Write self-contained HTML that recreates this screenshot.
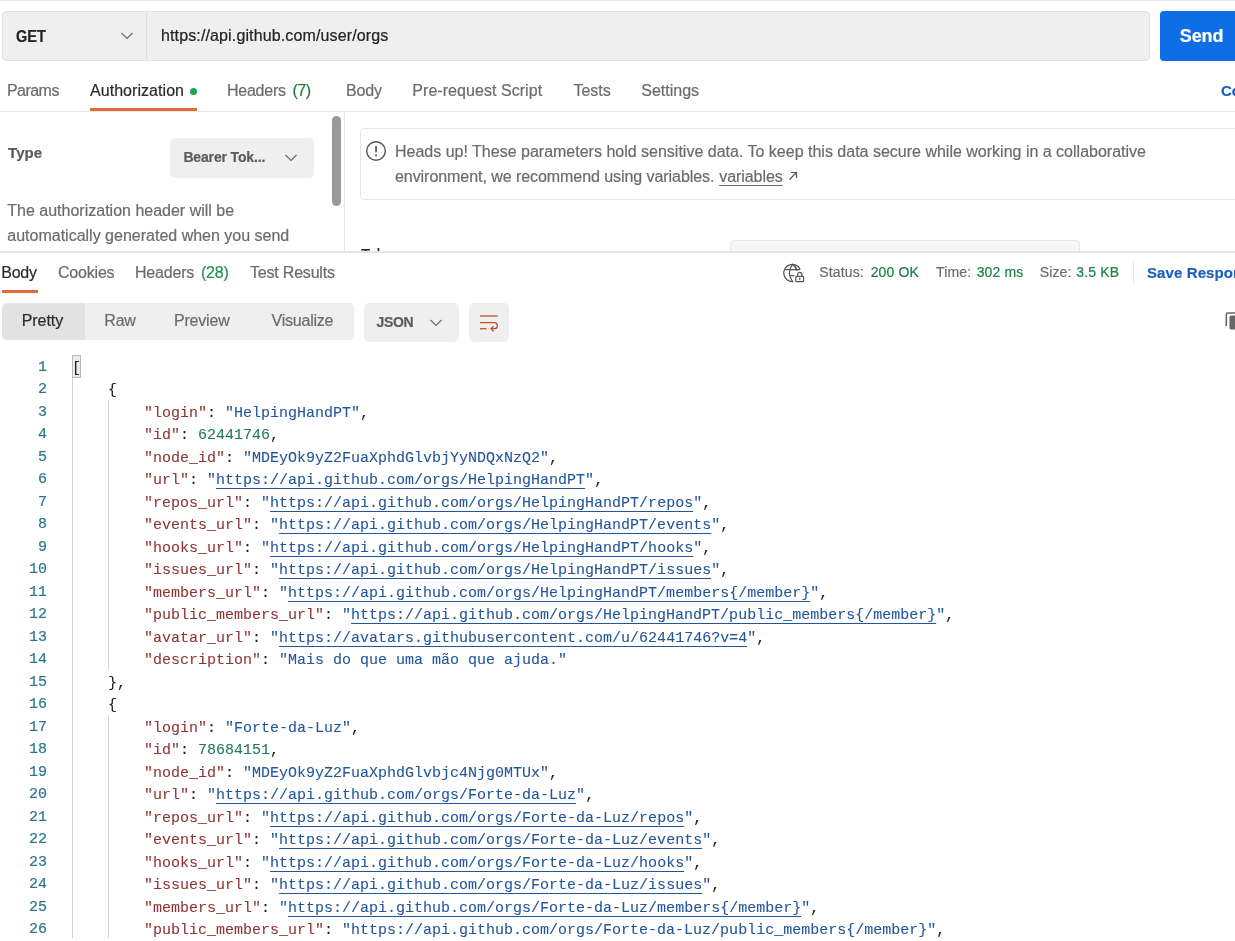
<!DOCTYPE html>
<html><head><meta charset="utf-8"><title>Postman</title>
<style>
html,body{margin:0;padding:0}
body{width:1235px;height:941px;overflow:hidden;position:relative;background:#ffffff;font-family:'Liberation Sans', sans-serif}
.t{position:absolute;white-space:pre;-webkit-text-stroke:0.2px currentColor}
.r{position:absolute}
</style></head><body>
<div id="root" style="position:absolute;left:0;top:0;width:1235px;height:941px;will-change:transform">
<div class="r" style="left:0px;top:0px;width:1235px;height:1px;background:#e6e6e6"></div>
<div class="r" style="left:2px;top:11px;width:1148px;height:50px;background:#efefef;border:1px solid #e2e2e2;box-sizing:border-box;border-radius:4px"></div>
<div class="r" style="left:146px;top:12px;width:1px;height:48px;background:#dedede"></div>
<div class="t" style="left:16.20px;top:27px;font-size:16px;line-height:20px;color:#212121;font-weight:bold;letter-spacing:0px;font-family:'Liberation Sans', sans-serif;transform:scaleX(0.91);transform-origin:0 0">GET</div>
<svg class="r" style="left:120px;top:31px" width="14" height="10" viewBox="0 0 14 10"><path d="M1.5 2 L7 7.5 L12.5 2" fill="none" stroke="#6b6b6b" stroke-width="1.15"/></svg>
<div class="t" style="left:161.00px;top:26px;font-size:16px;line-height:20px;color:#212121;font-weight:normal;letter-spacing:0.13px;font-family:'Liberation Sans', sans-serif;">https://api.github.com/user/orgs</div>
<div class="r" style="left:1160px;top:11px;width:120px;height:50px;background:#0d6ee6;border-radius:4px"></div>
<div class="t" style="left:1179.80px;top:26px;font-size:18px;line-height:20px;color:#ffffff;font-weight:bold;letter-spacing:-0.1px;font-family:'Liberation Sans', sans-serif;">Send</div>
<div class="t" style="left:7.00px;top:81px;font-size:16px;line-height:20px;color:#6b6b6b;font-weight:normal;letter-spacing:-0.55px;font-family:'Liberation Sans', sans-serif;">Params</div>
<div class="t" style="left:90.00px;top:81px;font-size:16px;line-height:20px;color:#2b2b2b;font-weight:normal;letter-spacing:0.05px;font-family:'Liberation Sans', sans-serif;">Authorization</div>
<div class="r" style="left:190px;top:87.5px;width:7px;height:7px;background:#1fa848;border-radius:50%"></div>
<div class="t" style="left:227.00px;top:81px;font-size:16px;line-height:20px;color:#6b6b6b;font-weight:normal;letter-spacing:-0.25px;font-family:'Liberation Sans', sans-serif;">Headers</div>
<div class="t" style="left:292.50px;top:81px;font-size:16px;line-height:20px;color:#1b7a43;font-weight:normal;letter-spacing:-0.5px;font-family:'Liberation Sans', sans-serif;">(7)</div>
<div class="t" style="left:346.00px;top:81px;font-size:16px;line-height:20px;color:#6b6b6b;font-weight:normal;letter-spacing:-0.15px;font-family:'Liberation Sans', sans-serif;">Body</div>
<div class="t" style="left:412.30px;top:81px;font-size:16px;line-height:20px;color:#6b6b6b;font-weight:normal;letter-spacing:0.05px;font-family:'Liberation Sans', sans-serif;">Pre-request Script</div>
<div class="t" style="left:573.40px;top:81px;font-size:16px;line-height:20px;color:#6b6b6b;font-weight:normal;letter-spacing:0px;font-family:'Liberation Sans', sans-serif;">Tests</div>
<div class="t" style="left:641.30px;top:81px;font-size:16px;line-height:20px;color:#6b6b6b;font-weight:normal;letter-spacing:0px;font-family:'Liberation Sans', sans-serif;">Settings</div>
<div class="t" style="left:1221.00px;top:81px;font-size:15px;line-height:20px;color:#1a5cc2;font-weight:bold;letter-spacing:0px;font-family:'Liberation Sans', sans-serif;">Cookies</div>
<div class="r" style="left:90px;top:108px;width:107px;height:3px;background:#e8683d"></div>
<div class="r" style="left:0px;top:111px;width:1235px;height:1px;background:#e6e6e6"></div>
<div class="t" style="left:8.00px;top:143px;font-size:15px;line-height:20px;color:#5a5a5a;font-weight:bold;letter-spacing:0.1px;font-family:'Liberation Sans', sans-serif;">Type</div>
<div class="r" style="left:170px;top:138px;width:144px;height:40px;background:#efefef;border-radius:5px"></div>
<div class="t" style="left:183.40px;top:147px;font-size:14px;line-height:20px;color:#5c5c5c;font-weight:bold;letter-spacing:-0.15px;font-family:'Liberation Sans', sans-serif;">Bearer Tok...</div>
<svg class="r" style="left:284px;top:153px" width="14" height="10" viewBox="0 0 14 10"><path d="M1.5 2 L7 7.5 L12.5 2" fill="none" stroke="#6b6b6b" stroke-width="1.15"/></svg>
<div class="t" style="left:7.30px;top:201px;font-size:16px;line-height:20px;color:#6b6b6b;font-weight:normal;letter-spacing:0px;font-family:'Liberation Sans', sans-serif;">The authorization header will be</div>
<div class="t" style="left:7.30px;top:226px;font-size:16px;line-height:20px;color:#6b6b6b;font-weight:normal;letter-spacing:0px;font-family:'Liberation Sans', sans-serif;">automatically generated when you send</div>
<div class="r" style="left:332px;top:116px;width:9px;height:90px;background:#9a9a9a;border-radius:5px"></div>
<div class="r" style="left:344px;top:112px;width:1px;height:140px;background:#e6e6e6"></div>
<div class="r" style="left:360px;top:128px;width:900px;height:72px;border:1px solid #e6e6e6;box-sizing:border-box;border-radius:4px;background:#fff"></div>
<svg class="r" style="left:365px;top:140px" width="22" height="22" viewBox="0 0 22 22"><circle cx="11" cy="11" r="9.3" fill="none" stroke="#555" stroke-width="1.4"/><rect x="10.2" y="5.8" width="1.7" height="6.8" rx="0.8" fill="#555"/><circle cx="11.05" cy="15.4" r="1.05" fill="#555"/></svg>
<div class="t" style="left:395.00px;top:142px;font-size:16px;line-height:20px;color:#6b6b6b;font-weight:normal;letter-spacing:0px;font-family:'Liberation Sans', sans-serif;">Heads up! These parameters hold sensitive data. To keep this data secure while working in a collaborative</div>
<div class="t" style="left:395.00px;top:167px;font-size:16px;line-height:20px;color:#6b6b6b;font-weight:normal;letter-spacing:-0.06px;font-family:'Liberation Sans', sans-serif;">environment, we recommend using variables. </div>
<div class="t" style="left:719.20px;top:167px;font-size:16px;line-height:20px;color:#6b6b6b;font-weight:normal;letter-spacing:-0.05px;font-family:'Liberation Sans', sans-serif;text-decoration:underline;text-underline-offset:3px">variables</div>
<svg class="r" style="left:788px;top:171px" width="10" height="10" viewBox="0 0 10 10"><path d="M1.5 8.5 L8.5 1.5 M3 1.5 H8.5 V7" fill="none" stroke="#555" stroke-width="1.2"/></svg>
<div class="r" style="left:345px;top:200px;width:890px;height:51px;overflow:hidden"><div class="t" style="left:16px;top:44.3px;font-size:15px;line-height:20px;color:#212121;font-family:'Liberation Sans', sans-serif">Token</div><div class="r" style="left:385px;top:40px;width:350px;height:40px;background:#f6f6f6;border:1px solid #e6e6e6;box-sizing:border-box;border-radius:4px"></div></div>
<div class="r" style="left:0px;top:250.8px;width:1235px;height:2.2px;background:#e4e4e4"></div>
<div class="t" style="left:1.30px;top:263px;font-size:16px;line-height:20px;color:#2b2b2b;font-weight:normal;letter-spacing:-0.25px;font-family:'Liberation Sans', sans-serif;">Body</div>
<div class="t" style="left:58.00px;top:263px;font-size:16px;line-height:20px;color:#6b6b6b;font-weight:normal;letter-spacing:-0.2px;font-family:'Liberation Sans', sans-serif;">Cookies</div>
<div class="t" style="left:135.00px;top:263px;font-size:16px;line-height:20px;color:#6b6b6b;font-weight:normal;letter-spacing:-0.2px;font-family:'Liberation Sans', sans-serif;">Headers</div>
<div class="t" style="left:201.00px;top:263px;font-size:16px;line-height:20px;color:#27924f;font-weight:normal;letter-spacing:-0.25px;font-family:'Liberation Sans', sans-serif;">(28)</div>
<div class="t" style="left:250.00px;top:263px;font-size:16px;line-height:20px;color:#6b6b6b;font-weight:normal;letter-spacing:-0.2px;font-family:'Liberation Sans', sans-serif;">Test Results</div>
<div class="r" style="left:2px;top:290px;width:36px;height:3px;background:#e8683d"></div>
<svg class="r" style="left:780px;top:258px" width="30" height="30" viewBox="780 258 30 30"><g fill="none" stroke="#555" stroke-width="1.25" stroke-linecap="round"><path d="M799.9 268.8 A8.6 8.6 0 1 0 792.6 281.6"/><path d="M792.5 264.4 Q786.2 273 792.6 281.6"/><path d="M792.5 264.4 Q795.8 266.5 796.8 270.6"/><path d="M785.6 269.6 H799.6"/><path d="M790.6 275.5 H793.8"/><rect x="795.8" y="276.4" width="7.8" height="5.2" rx="0.9"/><path d="M797.6 276.4 V274.6 A2.15 2.15 0 0 1 801.9 274.6 V276.4"/><path d="M799.75 278.1 V279.7"/></g></svg>
<div class="t" style="left:819.30px;top:262px;font-size:14px;line-height:20px;color:#6b6b6b;font-weight:normal;letter-spacing:0.15px;font-family:'Liberation Sans', sans-serif;">Status:</div>
<div class="t" style="left:870.70px;top:262px;font-size:14px;line-height:20px;color:#1b7f47;font-weight:normal;letter-spacing:0.15px;font-family:'Liberation Sans', sans-serif;">200 OK</div>
<div class="t" style="left:936.00px;top:262px;font-size:14px;line-height:20px;color:#6b6b6b;font-weight:normal;letter-spacing:0.15px;font-family:'Liberation Sans', sans-serif;">Time:</div>
<div class="t" style="left:976.70px;top:262px;font-size:14px;line-height:20px;color:#1b7f47;font-weight:normal;letter-spacing:0.15px;font-family:'Liberation Sans', sans-serif;">302 ms</div>
<div class="t" style="left:1039.70px;top:262px;font-size:14px;line-height:20px;color:#6b6b6b;font-weight:normal;letter-spacing:0.15px;font-family:'Liberation Sans', sans-serif;">Size:</div>
<div class="t" style="left:1076.30px;top:262px;font-size:14px;line-height:20px;color:#1b7f47;font-weight:normal;letter-spacing:0.15px;font-family:'Liberation Sans', sans-serif;">3.5 KB</div>
<div class="r" style="left:1133px;top:261px;width:1px;height:23px;background:#e6e6e6"></div>
<div class="t" style="left:1147.00px;top:263px;font-size:15px;line-height:20px;color:#1d5fbd;font-weight:bold;letter-spacing:0.1px;font-family:'Liberation Sans', sans-serif;">Save Response</div>
<div class="r" style="left:2px;top:303px;width:352px;height:37px;background:#efefef;border-radius:5px;overflow:hidden"></div>
<div class="r" style="left:2px;top:303px;width:83px;height:37px;background:#e2e2e2;border-radius:5px 0 0 5px"></div>
<div class="t" style="left:21.70px;top:311px;font-size:16px;line-height:20px;color:#2b2b2b;font-weight:normal;letter-spacing:-0.05px;font-family:'Liberation Sans', sans-serif;">Pretty</div>
<div class="t" style="left:104.30px;top:311px;font-size:16px;line-height:20px;color:#6b6b6b;font-weight:normal;letter-spacing:-0.2px;font-family:'Liberation Sans', sans-serif;">Raw</div>
<div class="t" style="left:174.00px;top:311px;font-size:16px;line-height:20px;color:#6b6b6b;font-weight:normal;letter-spacing:-0.2px;font-family:'Liberation Sans', sans-serif;">Preview</div>
<div class="t" style="left:271.50px;top:311px;font-size:16px;line-height:20px;color:#6b6b6b;font-weight:normal;letter-spacing:-0.22px;font-family:'Liberation Sans', sans-serif;">Visualize</div>
<div class="r" style="left:364px;top:303px;width:95px;height:39px;background:#efefef;border-radius:5px"></div>
<div class="t" style="left:376.40px;top:312px;font-size:14px;line-height:20px;color:#5c5c5c;font-weight:bold;letter-spacing:-0.3px;font-family:'Liberation Sans', sans-serif;">JSON</div>
<svg class="r" style="left:429px;top:318px" width="14" height="10" viewBox="0 0 14 10"><path d="M1.5 2 L7 7.5 L12.5 2" fill="none" stroke="#6b6b6b" stroke-width="1.15"/></svg>
<div class="r" style="left:469px;top:303px;width:40px;height:39px;background:#efefef;border-radius:5px"></div>
<svg class="r" style="left:470px;top:305px" width="38" height="36" viewBox="470 305 38 36"><g fill="none" stroke="#c24f2b" stroke-width="1.3" stroke-linecap="butt"><path d="M480 316 H497.8"/><path d="M480 322.7 H494.3 A3 3 0 0 1 494.3 328.7 H491"/><path d="M493.6 326.1 L491 328.7 L493.6 331.3"/><path d="M480 328.7 H486.5"/></g></svg>
<svg class="r" style="left:1224px;top:311px" width="16" height="20" viewBox="0 0 16 20"><path d="M2.3 15 V3.5 A1.5 1.5 0 0 1 3.8 2 H15" fill="none" stroke="#666" stroke-width="1.6"/><rect x="5.5" y="4.5" width="12" height="14" rx="1.5" fill="#666"/></svg>
<div class="r" style="left:72px;top:378px;width:1px;height:560px;background:#d4d4d4"></div>
<div class="r" style="left:108px;top:400px;width:1px;height:270px;background:#d4d4d4"></div>
<div class="r" style="left:108px;top:715px;width:1px;height:223px;background:#d4d4d4"></div>
<div class="r" style="left:72px;top:355px;width:9px;height:23px;background:#ececec;border:1px solid #b8b8b8;box-sizing:border-box"></div>
<div class="t" style="left:10.00px;top:356.60px;font-size:15px;line-height:22px;color:#2a7690;font-weight:normal;letter-spacing:0px;font-family:'Liberation Mono', monospace;width:37px;text-align:right">1</div>
<div class="t" style="left:72.00px;top:357.60px;font-size:15px;line-height:22px;color:#222222;font-weight:normal;letter-spacing:0px;font-family:'Liberation Mono', monospace;-webkit-text-stroke:0.08px currentColor"><span style="color:#222222">[</span></div>
<div class="t" style="left:10.00px;top:379.10px;font-size:15px;line-height:22px;color:#2a7690;font-weight:normal;letter-spacing:0px;font-family:'Liberation Mono', monospace;width:37px;text-align:right">2</div>
<div class="t" style="left:108.00px;top:380.10px;font-size:15px;line-height:22px;color:#222222;font-weight:normal;letter-spacing:0px;font-family:'Liberation Mono', monospace;-webkit-text-stroke:0.08px currentColor"><span style="color:#222222">{</span></div>
<div class="t" style="left:10.00px;top:401.60px;font-size:15px;line-height:22px;color:#2a7690;font-weight:normal;letter-spacing:0px;font-family:'Liberation Mono', monospace;width:37px;text-align:right">3</div>
<div class="t" style="left:144.00px;top:402.60px;font-size:15px;line-height:22px;color:#222222;font-weight:normal;letter-spacing:0px;font-family:'Liberation Mono', monospace;-webkit-text-stroke:0.08px currentColor"><span style="color:#8f3434">&quot;login&quot;</span><span style="color:#222222">: </span><span style="color:#22559a">&quot;HelpingHandPT&quot;</span><span style="color:#222222">,</span></div>
<div class="t" style="left:10.00px;top:424.10px;font-size:15px;line-height:22px;color:#2a7690;font-weight:normal;letter-spacing:0px;font-family:'Liberation Mono', monospace;width:37px;text-align:right">4</div>
<div class="t" style="left:144.00px;top:425.10px;font-size:15px;line-height:22px;color:#222222;font-weight:normal;letter-spacing:0px;font-family:'Liberation Mono', monospace;-webkit-text-stroke:0.08px currentColor"><span style="color:#8f3434">&quot;id&quot;</span><span style="color:#222222">: </span><span style="color:#1d7a54">62441746</span><span style="color:#222222">,</span></div>
<div class="t" style="left:10.00px;top:446.60px;font-size:15px;line-height:22px;color:#2a7690;font-weight:normal;letter-spacing:0px;font-family:'Liberation Mono', monospace;width:37px;text-align:right">5</div>
<div class="t" style="left:144.00px;top:447.60px;font-size:15px;line-height:22px;color:#222222;font-weight:normal;letter-spacing:0px;font-family:'Liberation Mono', monospace;-webkit-text-stroke:0.08px currentColor"><span style="color:#8f3434">&quot;node_id&quot;</span><span style="color:#222222">: </span><span style="color:#22559a">&quot;MDEyOk9yZ2FuaXphdGlvbjYyNDQxNzQ2&quot;</span><span style="color:#222222">,</span></div>
<div class="t" style="left:10.00px;top:469.10px;font-size:15px;line-height:22px;color:#2a7690;font-weight:normal;letter-spacing:0px;font-family:'Liberation Mono', monospace;width:37px;text-align:right">6</div>
<div class="t" style="left:144.00px;top:470.10px;font-size:15px;line-height:22px;color:#222222;font-weight:normal;letter-spacing:0px;font-family:'Liberation Mono', monospace;-webkit-text-stroke:0.08px currentColor"><span style="color:#8f3434">&quot;url&quot;</span><span style="color:#222222">: </span><span style="color:#22559a">&quot;</span><span style="color:#22559a;text-decoration:underline;text-underline-offset:4px;text-decoration-thickness:1px">https://api.github.com/orgs/HelpingHandPT</span><span style="color:#22559a">&quot;</span><span style="color:#222222">,</span></div>
<div class="t" style="left:10.00px;top:491.60px;font-size:15px;line-height:22px;color:#2a7690;font-weight:normal;letter-spacing:0px;font-family:'Liberation Mono', monospace;width:37px;text-align:right">7</div>
<div class="t" style="left:144.00px;top:492.60px;font-size:15px;line-height:22px;color:#222222;font-weight:normal;letter-spacing:0px;font-family:'Liberation Mono', monospace;-webkit-text-stroke:0.08px currentColor"><span style="color:#8f3434">&quot;repos_url&quot;</span><span style="color:#222222">: </span><span style="color:#22559a">&quot;</span><span style="color:#22559a;text-decoration:underline;text-underline-offset:4px;text-decoration-thickness:1px">https://api.github.com/orgs/HelpingHandPT/repos</span><span style="color:#22559a">&quot;</span><span style="color:#222222">,</span></div>
<div class="t" style="left:10.00px;top:514.10px;font-size:15px;line-height:22px;color:#2a7690;font-weight:normal;letter-spacing:0px;font-family:'Liberation Mono', monospace;width:37px;text-align:right">8</div>
<div class="t" style="left:144.00px;top:515.10px;font-size:15px;line-height:22px;color:#222222;font-weight:normal;letter-spacing:0px;font-family:'Liberation Mono', monospace;-webkit-text-stroke:0.08px currentColor"><span style="color:#8f3434">&quot;events_url&quot;</span><span style="color:#222222">: </span><span style="color:#22559a">&quot;</span><span style="color:#22559a;text-decoration:underline;text-underline-offset:4px;text-decoration-thickness:1px">https://api.github.com/orgs/HelpingHandPT/events</span><span style="color:#22559a">&quot;</span><span style="color:#222222">,</span></div>
<div class="t" style="left:10.00px;top:536.60px;font-size:15px;line-height:22px;color:#2a7690;font-weight:normal;letter-spacing:0px;font-family:'Liberation Mono', monospace;width:37px;text-align:right">9</div>
<div class="t" style="left:144.00px;top:537.60px;font-size:15px;line-height:22px;color:#222222;font-weight:normal;letter-spacing:0px;font-family:'Liberation Mono', monospace;-webkit-text-stroke:0.08px currentColor"><span style="color:#8f3434">&quot;hooks_url&quot;</span><span style="color:#222222">: </span><span style="color:#22559a">&quot;</span><span style="color:#22559a;text-decoration:underline;text-underline-offset:4px;text-decoration-thickness:1px">https://api.github.com/orgs/HelpingHandPT/hooks</span><span style="color:#22559a">&quot;</span><span style="color:#222222">,</span></div>
<div class="t" style="left:10.00px;top:559.10px;font-size:15px;line-height:22px;color:#2a7690;font-weight:normal;letter-spacing:0px;font-family:'Liberation Mono', monospace;width:37px;text-align:right">10</div>
<div class="t" style="left:144.00px;top:560.10px;font-size:15px;line-height:22px;color:#222222;font-weight:normal;letter-spacing:0px;font-family:'Liberation Mono', monospace;-webkit-text-stroke:0.08px currentColor"><span style="color:#8f3434">&quot;issues_url&quot;</span><span style="color:#222222">: </span><span style="color:#22559a">&quot;</span><span style="color:#22559a;text-decoration:underline;text-underline-offset:4px;text-decoration-thickness:1px">https://api.github.com/orgs/HelpingHandPT/issues</span><span style="color:#22559a">&quot;</span><span style="color:#222222">,</span></div>
<div class="t" style="left:10.00px;top:581.60px;font-size:15px;line-height:22px;color:#2a7690;font-weight:normal;letter-spacing:0px;font-family:'Liberation Mono', monospace;width:37px;text-align:right">11</div>
<div class="t" style="left:144.00px;top:582.60px;font-size:15px;line-height:22px;color:#222222;font-weight:normal;letter-spacing:0px;font-family:'Liberation Mono', monospace;-webkit-text-stroke:0.08px currentColor"><span style="color:#8f3434">&quot;members_url&quot;</span><span style="color:#222222">: </span><span style="color:#22559a">&quot;</span><span style="color:#22559a;text-decoration:underline;text-underline-offset:4px;text-decoration-thickness:1px">https://api.github.com/orgs/HelpingHandPT/members{/member}</span><span style="color:#22559a">&quot;</span><span style="color:#222222">,</span></div>
<div class="t" style="left:10.00px;top:604.10px;font-size:15px;line-height:22px;color:#2a7690;font-weight:normal;letter-spacing:0px;font-family:'Liberation Mono', monospace;width:37px;text-align:right">12</div>
<div class="t" style="left:144.00px;top:605.10px;font-size:15px;line-height:22px;color:#222222;font-weight:normal;letter-spacing:0px;font-family:'Liberation Mono', monospace;-webkit-text-stroke:0.08px currentColor"><span style="color:#8f3434">&quot;public_members_url&quot;</span><span style="color:#222222">: </span><span style="color:#22559a">&quot;</span><span style="color:#22559a;text-decoration:underline;text-underline-offset:4px;text-decoration-thickness:1px">https://api.github.com/orgs/HelpingHandPT/public_members{/member}</span><span style="color:#22559a">&quot;</span><span style="color:#222222">,</span></div>
<div class="t" style="left:10.00px;top:626.60px;font-size:15px;line-height:22px;color:#2a7690;font-weight:normal;letter-spacing:0px;font-family:'Liberation Mono', monospace;width:37px;text-align:right">13</div>
<div class="t" style="left:144.00px;top:627.60px;font-size:15px;line-height:22px;color:#222222;font-weight:normal;letter-spacing:0px;font-family:'Liberation Mono', monospace;-webkit-text-stroke:0.08px currentColor"><span style="color:#8f3434">&quot;avatar_url&quot;</span><span style="color:#222222">: </span><span style="color:#22559a">&quot;</span><span style="color:#22559a;text-decoration:underline;text-underline-offset:4px;text-decoration-thickness:1px">https://avatars.githubusercontent.com/u/62441746?v=4</span><span style="color:#22559a">&quot;</span><span style="color:#222222">,</span></div>
<div class="t" style="left:10.00px;top:649.10px;font-size:15px;line-height:22px;color:#2a7690;font-weight:normal;letter-spacing:0px;font-family:'Liberation Mono', monospace;width:37px;text-align:right">14</div>
<div class="t" style="left:144.00px;top:650.10px;font-size:15px;line-height:22px;color:#222222;font-weight:normal;letter-spacing:0px;font-family:'Liberation Mono', monospace;-webkit-text-stroke:0.08px currentColor"><span style="color:#8f3434">&quot;description&quot;</span><span style="color:#222222">: </span><span style="color:#22559a">&quot;Mais do que uma mão que ajuda.&quot;</span></div>
<div class="t" style="left:10.00px;top:671.60px;font-size:15px;line-height:22px;color:#2a7690;font-weight:normal;letter-spacing:0px;font-family:'Liberation Mono', monospace;width:37px;text-align:right">15</div>
<div class="t" style="left:108.00px;top:672.60px;font-size:15px;line-height:22px;color:#222222;font-weight:normal;letter-spacing:0px;font-family:'Liberation Mono', monospace;-webkit-text-stroke:0.08px currentColor"><span style="color:#222222">},</span></div>
<div class="t" style="left:10.00px;top:694.10px;font-size:15px;line-height:22px;color:#2a7690;font-weight:normal;letter-spacing:0px;font-family:'Liberation Mono', monospace;width:37px;text-align:right">16</div>
<div class="t" style="left:108.00px;top:695.10px;font-size:15px;line-height:22px;color:#222222;font-weight:normal;letter-spacing:0px;font-family:'Liberation Mono', monospace;-webkit-text-stroke:0.08px currentColor"><span style="color:#222222">{</span></div>
<div class="t" style="left:10.00px;top:716.60px;font-size:15px;line-height:22px;color:#2a7690;font-weight:normal;letter-spacing:0px;font-family:'Liberation Mono', monospace;width:37px;text-align:right">17</div>
<div class="t" style="left:144.00px;top:717.60px;font-size:15px;line-height:22px;color:#222222;font-weight:normal;letter-spacing:0px;font-family:'Liberation Mono', monospace;-webkit-text-stroke:0.08px currentColor"><span style="color:#8f3434">&quot;login&quot;</span><span style="color:#222222">: </span><span style="color:#22559a">&quot;Forte-da-Luz&quot;</span><span style="color:#222222">,</span></div>
<div class="t" style="left:10.00px;top:739.10px;font-size:15px;line-height:22px;color:#2a7690;font-weight:normal;letter-spacing:0px;font-family:'Liberation Mono', monospace;width:37px;text-align:right">18</div>
<div class="t" style="left:144.00px;top:740.10px;font-size:15px;line-height:22px;color:#222222;font-weight:normal;letter-spacing:0px;font-family:'Liberation Mono', monospace;-webkit-text-stroke:0.08px currentColor"><span style="color:#8f3434">&quot;id&quot;</span><span style="color:#222222">: </span><span style="color:#1d7a54">78684151</span><span style="color:#222222">,</span></div>
<div class="t" style="left:10.00px;top:761.60px;font-size:15px;line-height:22px;color:#2a7690;font-weight:normal;letter-spacing:0px;font-family:'Liberation Mono', monospace;width:37px;text-align:right">19</div>
<div class="t" style="left:144.00px;top:762.60px;font-size:15px;line-height:22px;color:#222222;font-weight:normal;letter-spacing:0px;font-family:'Liberation Mono', monospace;-webkit-text-stroke:0.08px currentColor"><span style="color:#8f3434">&quot;node_id&quot;</span><span style="color:#222222">: </span><span style="color:#22559a">&quot;MDEyOk9yZ2FuaXphdGlvbjc4Njg0MTUx&quot;</span><span style="color:#222222">,</span></div>
<div class="t" style="left:10.00px;top:784.10px;font-size:15px;line-height:22px;color:#2a7690;font-weight:normal;letter-spacing:0px;font-family:'Liberation Mono', monospace;width:37px;text-align:right">20</div>
<div class="t" style="left:144.00px;top:785.10px;font-size:15px;line-height:22px;color:#222222;font-weight:normal;letter-spacing:0px;font-family:'Liberation Mono', monospace;-webkit-text-stroke:0.08px currentColor"><span style="color:#8f3434">&quot;url&quot;</span><span style="color:#222222">: </span><span style="color:#22559a">&quot;</span><span style="color:#22559a;text-decoration:underline;text-underline-offset:4px;text-decoration-thickness:1px">https://api.github.com/orgs/Forte-da-Luz</span><span style="color:#22559a">&quot;</span><span style="color:#222222">,</span></div>
<div class="t" style="left:10.00px;top:806.60px;font-size:15px;line-height:22px;color:#2a7690;font-weight:normal;letter-spacing:0px;font-family:'Liberation Mono', monospace;width:37px;text-align:right">21</div>
<div class="t" style="left:144.00px;top:807.60px;font-size:15px;line-height:22px;color:#222222;font-weight:normal;letter-spacing:0px;font-family:'Liberation Mono', monospace;-webkit-text-stroke:0.08px currentColor"><span style="color:#8f3434">&quot;repos_url&quot;</span><span style="color:#222222">: </span><span style="color:#22559a">&quot;</span><span style="color:#22559a;text-decoration:underline;text-underline-offset:4px;text-decoration-thickness:1px">https://api.github.com/orgs/Forte-da-Luz/repos</span><span style="color:#22559a">&quot;</span><span style="color:#222222">,</span></div>
<div class="t" style="left:10.00px;top:829.10px;font-size:15px;line-height:22px;color:#2a7690;font-weight:normal;letter-spacing:0px;font-family:'Liberation Mono', monospace;width:37px;text-align:right">22</div>
<div class="t" style="left:144.00px;top:830.10px;font-size:15px;line-height:22px;color:#222222;font-weight:normal;letter-spacing:0px;font-family:'Liberation Mono', monospace;-webkit-text-stroke:0.08px currentColor"><span style="color:#8f3434">&quot;events_url&quot;</span><span style="color:#222222">: </span><span style="color:#22559a">&quot;</span><span style="color:#22559a;text-decoration:underline;text-underline-offset:4px;text-decoration-thickness:1px">https://api.github.com/orgs/Forte-da-Luz/events</span><span style="color:#22559a">&quot;</span><span style="color:#222222">,</span></div>
<div class="t" style="left:10.00px;top:851.60px;font-size:15px;line-height:22px;color:#2a7690;font-weight:normal;letter-spacing:0px;font-family:'Liberation Mono', monospace;width:37px;text-align:right">23</div>
<div class="t" style="left:144.00px;top:852.60px;font-size:15px;line-height:22px;color:#222222;font-weight:normal;letter-spacing:0px;font-family:'Liberation Mono', monospace;-webkit-text-stroke:0.08px currentColor"><span style="color:#8f3434">&quot;hooks_url&quot;</span><span style="color:#222222">: </span><span style="color:#22559a">&quot;</span><span style="color:#22559a;text-decoration:underline;text-underline-offset:4px;text-decoration-thickness:1px">https://api.github.com/orgs/Forte-da-Luz/hooks</span><span style="color:#22559a">&quot;</span><span style="color:#222222">,</span></div>
<div class="t" style="left:10.00px;top:874.10px;font-size:15px;line-height:22px;color:#2a7690;font-weight:normal;letter-spacing:0px;font-family:'Liberation Mono', monospace;width:37px;text-align:right">24</div>
<div class="t" style="left:144.00px;top:875.10px;font-size:15px;line-height:22px;color:#222222;font-weight:normal;letter-spacing:0px;font-family:'Liberation Mono', monospace;-webkit-text-stroke:0.08px currentColor"><span style="color:#8f3434">&quot;issues_url&quot;</span><span style="color:#222222">: </span><span style="color:#22559a">&quot;</span><span style="color:#22559a;text-decoration:underline;text-underline-offset:4px;text-decoration-thickness:1px">https://api.github.com/orgs/Forte-da-Luz/issues</span><span style="color:#22559a">&quot;</span><span style="color:#222222">,</span></div>
<div class="t" style="left:10.00px;top:896.60px;font-size:15px;line-height:22px;color:#2a7690;font-weight:normal;letter-spacing:0px;font-family:'Liberation Mono', monospace;width:37px;text-align:right">25</div>
<div class="t" style="left:144.00px;top:897.60px;font-size:15px;line-height:22px;color:#222222;font-weight:normal;letter-spacing:0px;font-family:'Liberation Mono', monospace;-webkit-text-stroke:0.08px currentColor"><span style="color:#8f3434">&quot;members_url&quot;</span><span style="color:#222222">: </span><span style="color:#22559a">&quot;</span><span style="color:#22559a;text-decoration:underline;text-underline-offset:4px;text-decoration-thickness:1px">https://api.github.com/orgs/Forte-da-Luz/members{/member}</span><span style="color:#22559a">&quot;</span><span style="color:#222222">,</span></div>
<div class="t" style="left:10.00px;top:919.10px;font-size:15px;line-height:22px;color:#2a7690;font-weight:normal;letter-spacing:0px;font-family:'Liberation Mono', monospace;width:37px;text-align:right">26</div>
<div class="t" style="left:144.00px;top:920.10px;font-size:15px;line-height:22px;color:#222222;font-weight:normal;letter-spacing:0px;font-family:'Liberation Mono', monospace;-webkit-text-stroke:0.08px currentColor"><span style="color:#8f3434">&quot;public_members_url&quot;</span><span style="color:#222222">: </span><span style="color:#22559a">&quot;</span><span style="color:#22559a">https://api.github.com/orgs/Forte-da-Luz/public_members{/member}</span><span style="color:#22559a">&quot;</span><span style="color:#222222">,</span></div>
</div></body></html>
